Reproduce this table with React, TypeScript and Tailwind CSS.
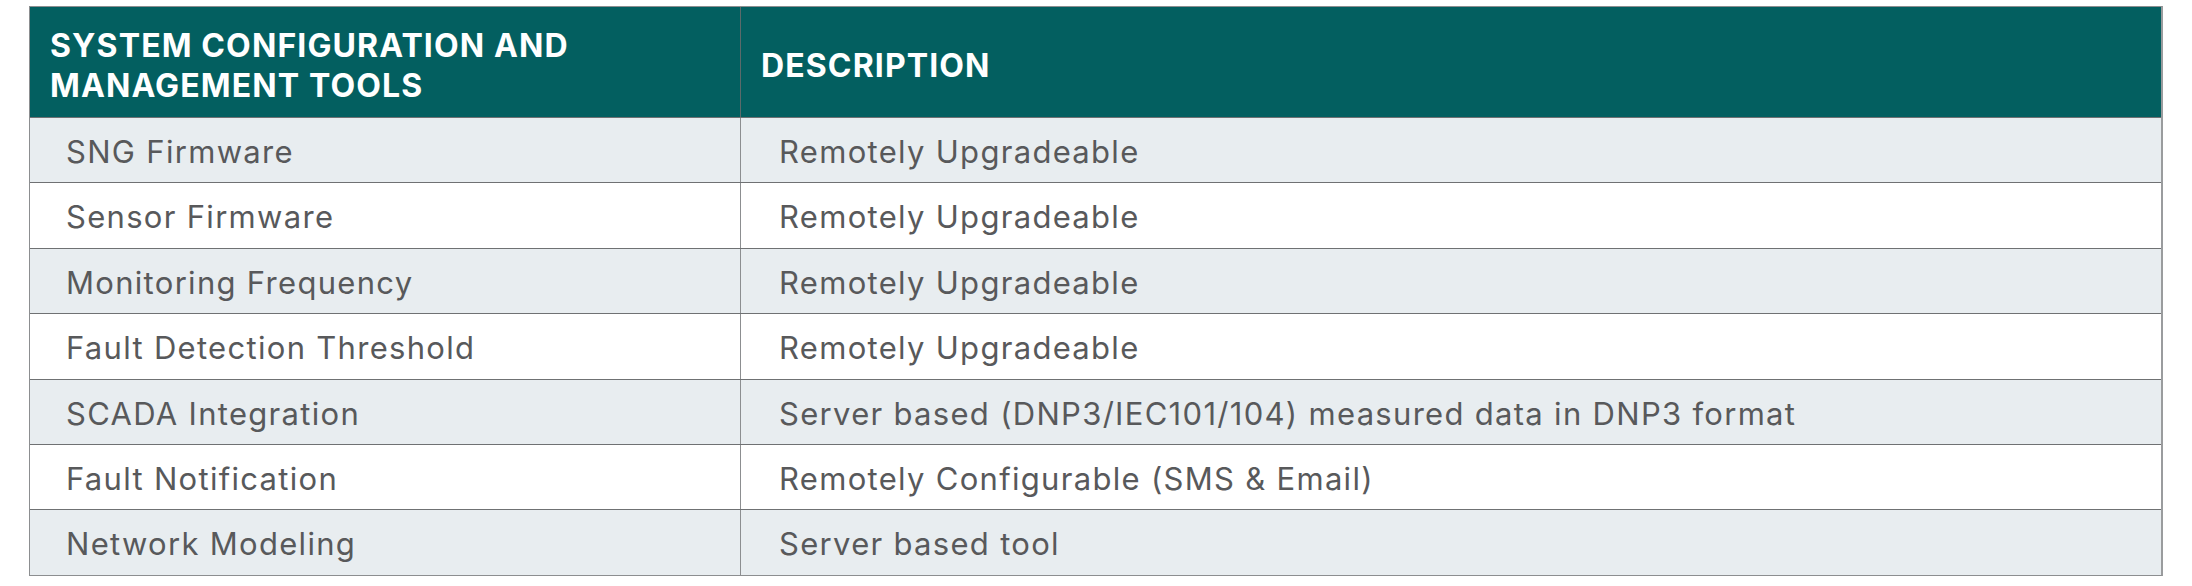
import React from 'react';

interface SpecRow {
  tool: string;
  description: string;
}

const rows: SpecRow[] = [
  { tool: 'SNG Firmware', description: 'Remotely Upgradeable' },
  { tool: 'Sensor Firmware', description: 'Remotely Upgradeable' },
  { tool: 'Monitoring Frequency', description: 'Remotely Upgradeable' },
  { tool: 'Fault Detection Threshold', description: 'Remotely Upgradeable' },
  { tool: 'SCADA Integration', description: 'Server based (DNP3/IEC101/104) measured data in DNP3 format' },
  { tool: 'Fault Notification', description: 'Remotely Configurable (SMS & Email)' },
  { tool: 'Network Modeling', description: 'Server based tool' },
];

const App: React.FC = () => {
  return (
    <div
      className="w-[2192px] h-[586px] bg-white pt-[6px] px-[29px]"
      style={{ fontFamily: 'Inter, "Noto Sans", sans-serif' }}
    >
      <div className="w-[2134px] border border-[#8c8e90] border-r-2 border-r-[#9a9c9e]">
        {/* Header */}
        <div className="flex h-[110px] bg-[#035f60] text-white font-bold tracking-[0.07em]">
          <div className="w-[711px] flex items-center pt-[8px] px-5 text-[32px] leading-[40px] border-r border-[#5c6a6a]">
            SYSTEM CONFIGURATION AND
            <br />
            MANAGEMENT TOOLS
          </div>
          <div className="flex-1 flex items-center pt-[8px] px-[20px] text-[32px]">DESCRIPTION</div>
        </div>

        {/* Rows */}
        {rows.map((row, i) => (
          <div
            key={row.tool}
            className={`flex h-[65.4px] border-t border-[#6f7173] text-[#58595b] text-[31px] tracking-[0.042em] ${
              i % 2 === 0 ? 'bg-[#e8edf0]' : 'bg-white'
            }`}
          >
            <div className="w-[711px] flex items-center pt-[4px] pl-[36px] border-r border-[#8c8e90]">{row.tool}</div>
            <div className="flex-1 flex items-center pt-[4px] pl-[38px]">{row.description}</div>
          </div>
        ))}
      </div>
    </div>
  );
};

export default App;
